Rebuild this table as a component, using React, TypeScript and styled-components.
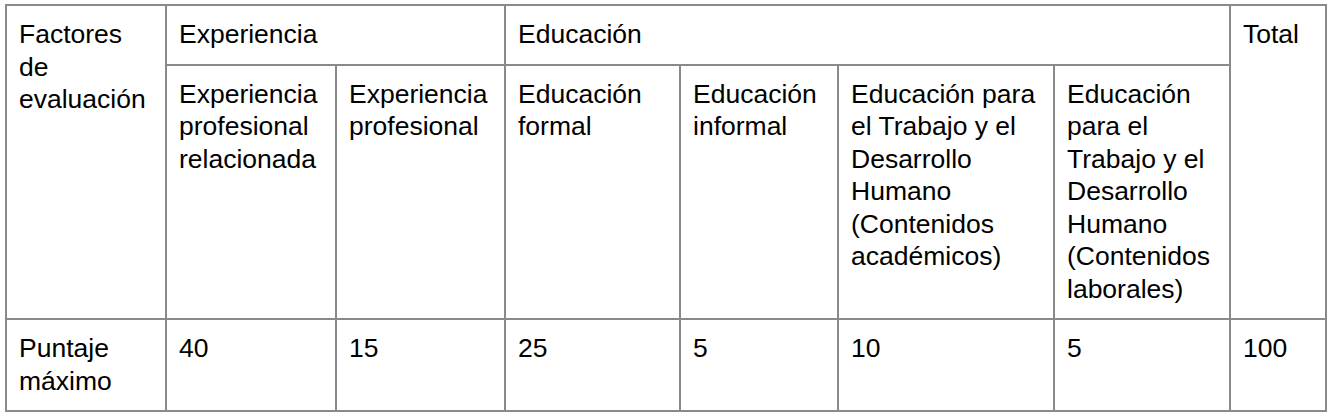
import styled, { createGlobalStyle } from "styled-components";

const GlobalStyle = createGlobalStyle`
  body {
    margin: 0;
    background: #ffffff;
    font-family: "Liberation Sans", Arial, Helvetica, sans-serif;
  }
`;

const Wrap = styled.div`
  padding: 4px 9px 0 5px;
`;

const Table = styled.table`
  width: 1320px;
  table-layout: fixed;
  border-collapse: collapse;
  color: #000;
  font-size: 26.5px;
  line-height: 32.5px;
`;

const Cell = styled.td`
  border: 2px solid #8a8a8a;
  padding: 12px 11px 13px 12px;
  vertical-align: top;
  text-align: left;
  font-weight: 400;
`;

const HeadCell = styled(Cell).attrs({ as: "th" })``;

const columns = [160, 170, 169, 175, 158, 216, 176, 96];

const subHeaders = [
  "Experiencia profesional relacionada",
  "Experiencia profesional",
  "Educación formal",
  "Educación informal",
  "Educación para el Trabajo y el Desarrollo Humano (Contenidos académicos)",
  "Educación para el Trabajo y el Desarrollo Humano (Contenidos laborales)",
];

const scores = ["40", "15", "25", "5", "10", "5"];

export default function App() {
  return (
    <>
      <GlobalStyle />
      <Wrap>
        <Table>
          <colgroup>
            {columns.map((w, i) => (
              <col key={i} style={{ width: w }} />
            ))}
          </colgroup>
          <thead>
            <tr>
              <HeadCell rowSpan={2}>Factores de evaluación</HeadCell>
              <HeadCell colSpan={2}>Experiencia</HeadCell>
              <HeadCell colSpan={4}>Educación</HeadCell>
              <HeadCell rowSpan={2}>Total</HeadCell>
            </tr>
            <tr>
              {subHeaders.map((h) => (
                <HeadCell key={h}>{h}</HeadCell>
              ))}
            </tr>
          </thead>
          <tbody>
            <tr>
              <Cell>Puntaje máximo</Cell>
              {scores.map((s, i) => (
                <Cell key={i}>{s}</Cell>
              ))}
              <Cell>100</Cell>
            </tr>
          </tbody>
        </Table>
      </Wrap>
    </>
  );
}
